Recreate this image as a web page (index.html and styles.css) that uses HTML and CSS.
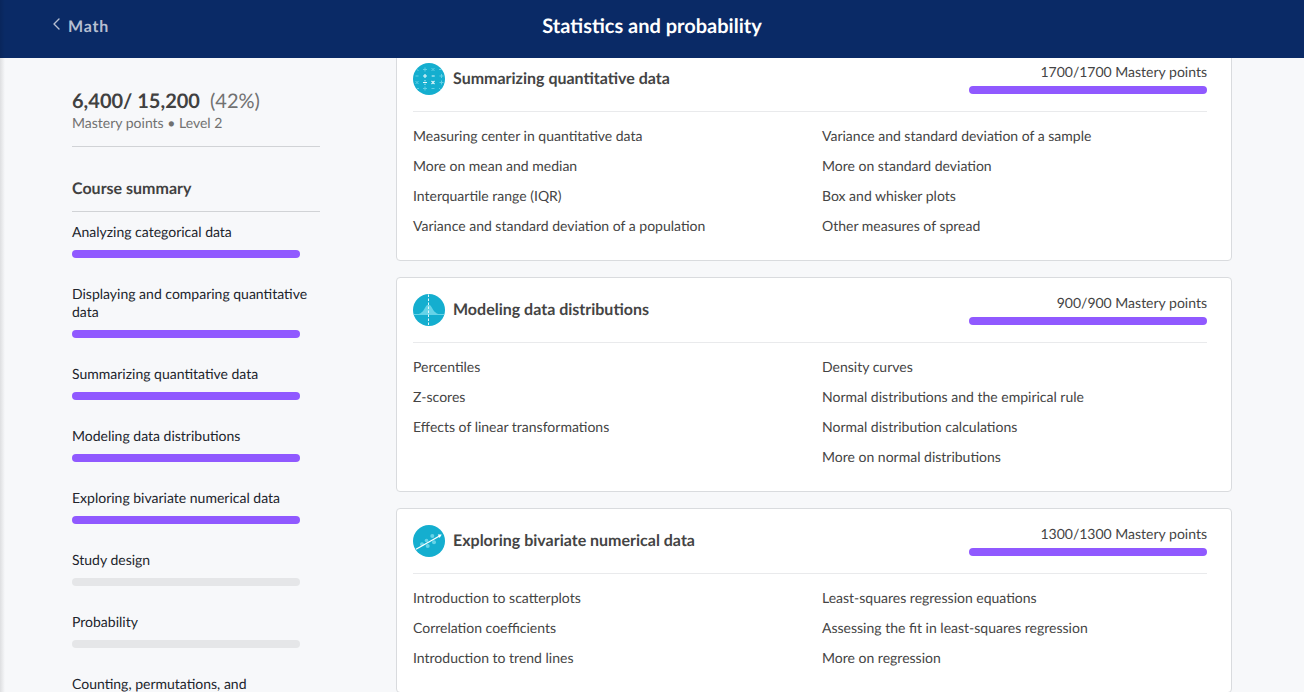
FILE: index.html
```
<!DOCTYPE html>
<html lang="en">
<head>
<meta charset="utf-8">
<title>Statistics and probability</title>
<link rel="stylesheet" href="styles.css">
</head>
<body>
<header class="topbar">
  <a class="back"><svg class="chevron" width="8" height="12" viewBox="0 0 8 12"><path d="M7 1 2 6l5 5" fill="none" stroke="currentColor" stroke-width="1.4" stroke-linecap="round" stroke-linejoin="round"/></svg><span>Math</span></a>
  <h1 class="title">Statistics and probability</h1>
</header>
<div class="page">
  <aside class="sidebar">
    <div class="score"><b>6,400/ 15,200</b><span class="percent">(42%)</span></div>
    <div class="level">Mastery points • Level 2</div>
    <h2 class="summary">Course summary</h2>
    <ul class="units">
      <li class="unit">Analyzing categorical data<div class="bar full"></div></li>
      <li class="unit">Displaying and comparing quantitative data<div class="bar full"></div></li>
      <li class="unit">Summarizing quantitative data<div class="bar full"></div></li>
      <li class="unit">Modeling data distributions<div class="bar full"></div></li>
      <li class="unit">Exploring bivariate numerical data<div class="bar full"></div></li>
      <li class="unit">Study design<div class="bar"></div></li>
      <li class="unit">Probability<div class="bar"></div></li>
      <li class="unit">Counting, permutations, and</li>
    </ul>
  </aside>
  <main class="cards">
    <section class="card">
      <div class="card-head">
        <svg class="icon" width="32" height="32" viewBox="0 0 32 32">
          <circle cx="16" cy="16" r="16" fill="#14aecf"/>
          <g stroke="#62cfe4" stroke-width="1" fill="none">
            <path d="M10 6.500h4M12 4.500v4M18.500 5l3 3M21.500 5l-3 3M3.500 6l2 2M26 6.500h3M2.500 13h3M26.500 13h4M28.500 11v4M2.500 18l3 3M5.500 18l-3 3M26.500 19.500h4M28.500 17.500v4M10 25.500h4M12 23.500v4M18.500 25.500h3M4 25.500h2M26 25l2 2"/>
          </g>
          <path d="M10 13h4M12 11v4M18.700 13h3M10 19.500h4M18.500 18l3 3M21.500 18l-3 3M12 17.200v1M12 20.800v1" stroke="#e6f8fb" stroke-width="1.100"/>
        </svg>
        <h3 class="name">Summarizing quantitative data</h3>
        <div class="points">1700/1700 Mastery points<div class="bar full"></div></div>
      </div>
      <div class="lessons">
        <ul><li>Measuring center in quantitative data</li><li>More on mean and median</li><li>Interquartile range (IQR)</li><li>Variance and standard deviation of a population</li></ul>
        <ul><li>Variance and standard deviation of a sample</li><li>More on standard deviation</li><li>Box and whisker plots</li><li>Other measures of spread</li></ul>
      </div>
    </section>
    <section class="card">
      <div class="card-head">
        <svg class="icon" width="32" height="32" viewBox="0 0 32 32">
          <circle cx="16" cy="16" r="16" fill="#14aecf"/>
          <path d="M4 20.500c5-1 6.500-4 8.500-7.500 1.500-3 4.500-3 6 0 2 3.500 3.500 6.500 8.500 7.500z" fill="#66d3e7"/>
          <path d="M.7 20.500h30.600" stroke="#66d3e7"/>
          <path d="M15.500 .5v31" stroke="#e6f8fb" stroke-width="1" stroke-dasharray="2.500 1.500"/>
        </svg>
        <h3 class="name">Modeling data distributions</h3>
        <div class="points">900/900 Mastery points<div class="bar full"></div></div>
      </div>
      <div class="lessons">
        <ul><li>Percentiles</li><li>Z-scores</li><li>Effects of linear transformations</li></ul>
        <ul><li>Density curves</li><li>Normal distributions and the empirical rule</li><li>Normal distribution calculations</li><li>More on normal distributions</li></ul>
      </div>
    </section>
    <section class="card">
      <div class="card-head">
        <svg class="icon" width="32" height="32" viewBox="0 0 32 32">
          <circle cx="16" cy="16" r="16" fill="#14aecf"/>
          <g fill="#66d3e7"><circle cx="9" cy="19.200" r="2"/><circle cx="14.700" cy="21" r="2"/><circle cx="13.500" cy="15.500" r="1.800"/><circle cx="19.300" cy="11" r="2"/><circle cx="21" cy="17.300" r="2"/></g>
          <path d="M3 24.200 26.500 11" stroke="#fff" stroke-width="1.300"/>
          <path d="M28.700 9.600 24.800 9.600 26.700 13z" fill="#fff"/>
        </svg>
        <h3 class="name">Exploring bivariate numerical data</h3>
        <div class="points">1300/1300 Mastery points<div class="bar full"></div></div>
      </div>
      <div class="lessons">
        <ul><li>Introduction to scatterplots</li><li>Correlation coefficients</li><li>Introduction to trend lines</li></ul>
        <ul><li>Least-squares regression equations</li><li>Assessing the fit in least-squares regression</li><li>More on regression</li></ul>
      </div>
    </section>
  </main>
</div>
<div class="edge-shadow"></div>
</body>
</html>
```
FILE: styles.css
```
* { box-sizing: border-box; }
body {
  margin: 0;
  height: 692px;
  overflow: hidden;
  display: flex;
  flex-direction: column;
  background: #f7f8fa;
  color: #21242c;
  font: 14px/18px Lato, "Noto Sans", sans-serif;
  text-rendering: geometricPrecision;
}
h1, h2, h3, ul { margin: 0; padding: 0; }
ul { list-style: none; }
.topbar {
  flex: none;
  height: 58px;
  padding: 0 52px;
  display: grid;
  grid-template-columns: 1fr auto 1fr;
  background: #0a2a66;
}
.back {
  display: flex;
  gap: 8px;
  padding-top: 17px;
  color: #b6bfd1;
  font-size: 16px;
  line-height: 20px;
  font-weight: 700;
  letter-spacing: .8px;
}
.chevron { margin-top: 1px; }
.title { padding-top: 14px; color: #fff; font-size: 20px; line-height: 24px; font-weight: 700; }
.page { flex: 1; min-height: 0; display: flex; overflow: hidden; }
.sidebar { flex: none; width: 248px; margin-left: 72px; padding-top: 31px; }
.score { font-size: 20px; line-height: 24px; color: #414141; }
.percent { margin-left: 10px; color: #717171; }
.level { height: 34px; padding-top: 1px; border-bottom: 1px solid #d1d3d6; color: #717171; }
.summary {
  height: 65px;
  padding-top: 32px;
  border-bottom: 1px solid #d1d3d6;
  color: #414141;
  font-size: 16px;
  line-height: 20px;
}
.units { padding-top: 11px; }
.unit { padding-bottom: 27px; }
.bar { height: 8px; border-radius: 4px; background: #e5e6e8; }
.bar.full { background: #9059ff; }
.unit .bar { width: 228px; margin-top: 9px; }
.cards {
  flex: none;
  width: 836px;
  margin: -12px 0 0 76px;
  display: flex;
  flex-direction: column;
  gap: 16px;
}
.card {
  flex: none;
  padding: 16px 24px 19px 16px;
  border: 1px solid #d9dbde;
  border-radius: 4px;
  background: #fff;
  color: #444;
}
.card-head { display: flex; height: 49px; border-bottom: 1px solid #e9eaec; }
.icon { flex: none; }
.name { flex: 1; margin-left: 8px; font-size: 16px; line-height: 32px; font-weight: 700; }
.points { width: 238px; text-align: right; }
.points .bar { margin-top: 5px; }
.lessons { display: grid; grid-template-columns: 409px 1fr; padding-top: 9px; line-height: 30px; }
.edge-shadow {
  position: absolute;
  left: 0;
  top: 0;
  width: 5px;
  height: 692px;
  background: linear-gradient(to right, rgba(0,0,0,.1), rgba(0,0,0,0));
}
```
